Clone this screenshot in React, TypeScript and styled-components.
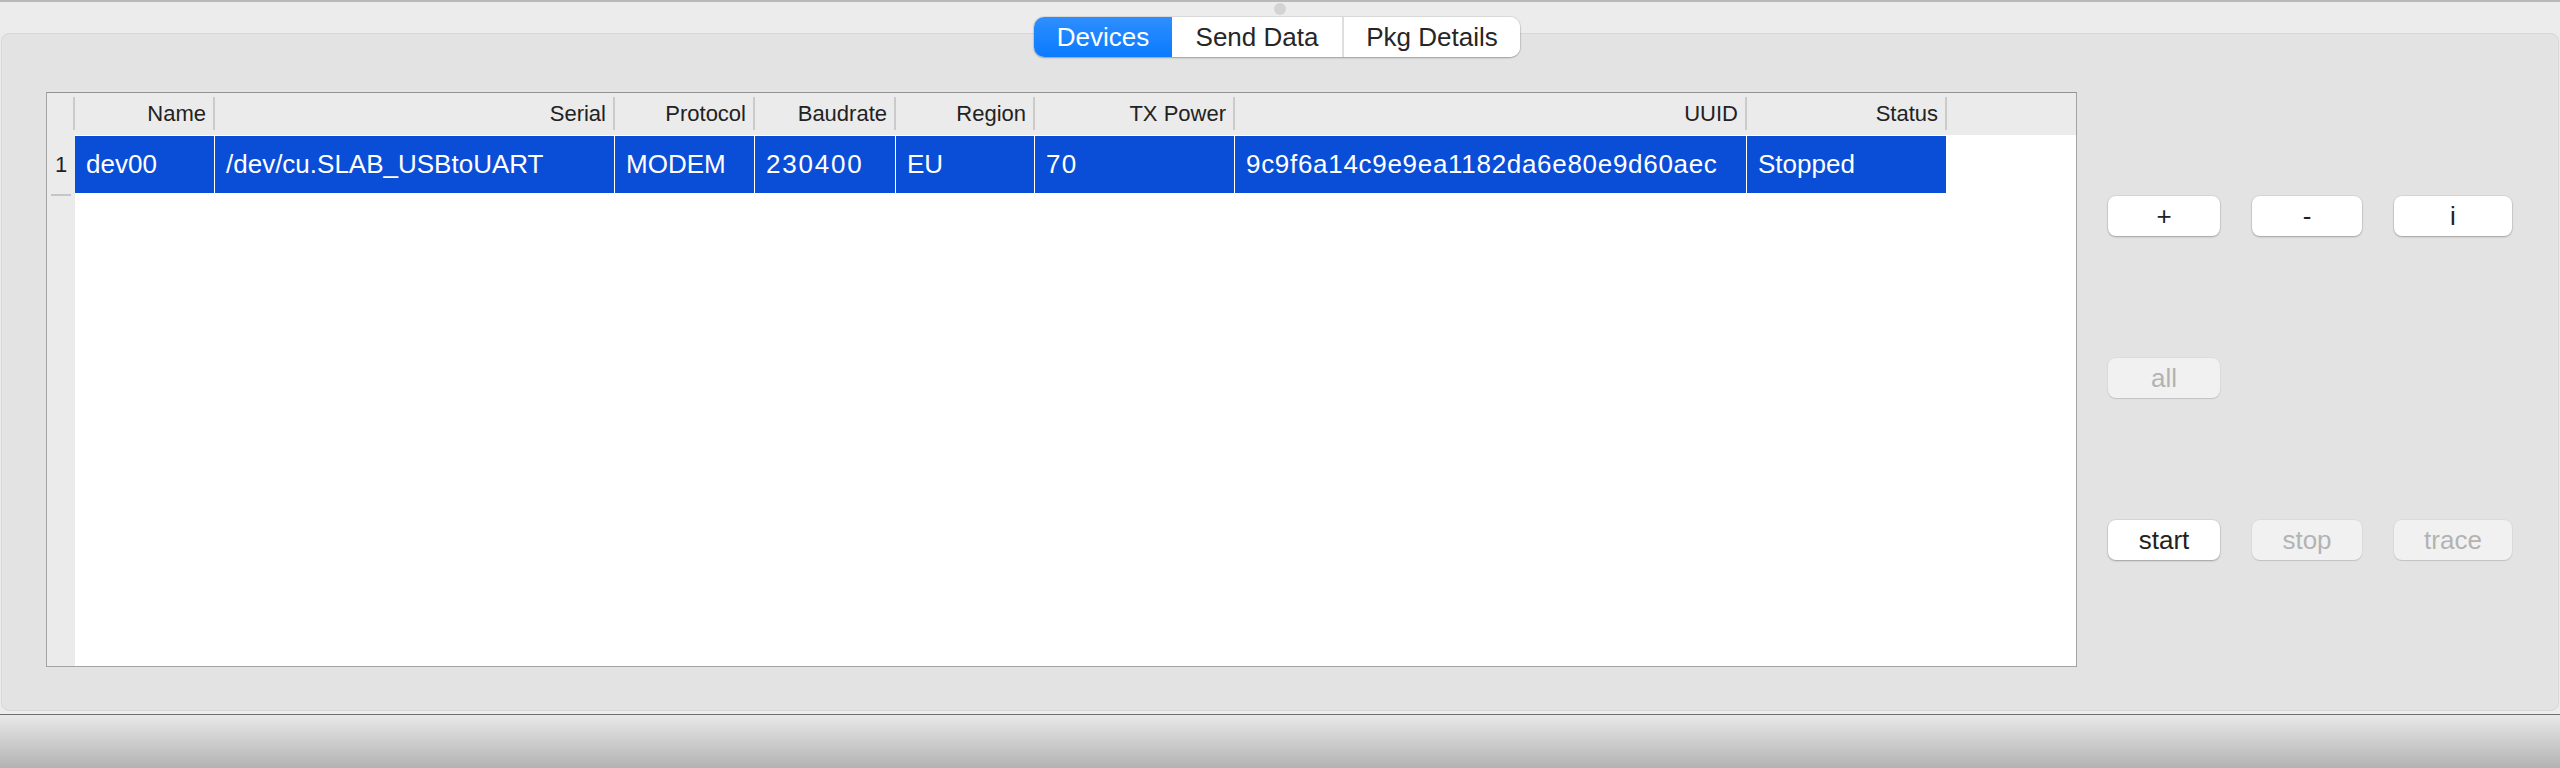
import React from "react";
import styled, { createGlobalStyle } from "styled-components";

const GlobalStyle = createGlobalStyle`
  html, body { margin: 0; padding: 0; }
  body {
    font-family: "Liberation Sans", Arial, Helvetica, sans-serif;
    background: #ececec;
    color: #222;
  }
  * { box-sizing: border-box; }
`;

const Window = styled.div`
  width: 2560px;
  height: 768px;
  display: flex;
  flex-direction: column;
  background: #ececec;
  overflow: hidden;
`;

const TopBar = styled.div`
  flex: none;
  height: 2px;
  background: #b9b9b9;
`;

const Content = styled.div`
  flex: 1;
  display: flex;
  flex-direction: column;
  padding: 0 1px;
`;

const Handle = styled.div`
  flex: none;
  width: 12px;
  height: 12px;
  border-radius: 50%;
  background: #d3d3d3;
  margin: 1px auto 0;
`;

const TabsRow = styled.div`
  display: flex;
  justify-content: center;
  margin-top: 2px;
  padding-right: 6px;
  position: relative;
  z-index: 1;
`;

const Segmented = styled.div`
  display: flex;
  height: 40px;
  border-radius: 10px;
  background: #ffffff;
  box-shadow: 0 0 0 1px rgba(0, 0, 0, 0.07), 0 1px 2px rgba(0, 0, 0, 0.25);
  overflow: hidden;
`;

const Segment = styled.div<{ $active?: boolean; $w: number; $divider?: boolean }>`
  width: ${(p) => p.$w}px;
  display: flex;
  align-items: center;
  justify-content: center;
  font-size: 26px;
  color: ${(p) => (p.$active ? "#ffffff" : "#262626")};
  background: ${(p) =>
    p.$active ? "linear-gradient(to bottom, #2e8efe, #0a7aff)" : "#ffffff"};
  border-left: ${(p) => (p.$divider ? "2px solid #dedede" : "none")};
`;

const Panel = styled.div`
  margin-top: -24px;
  height: 678px;
  border: 1px solid #d7d7d7;
  border-radius: 8px;
  background: #e3e3e3;
  display: flex;
  align-items: flex-start;
  padding: 58px 0 0 44px;
`;

const Table = styled.div`
  flex: none;
  width: 2031px;
  height: 575px;
  border: 1px solid #a3a3a3;
  border-top-color: #939393;
  display: flex;
  background: #ffffff;
`;

const RowHeaderColumn = styled.div`
  flex: none;
  width: 28px;
  background: #ebebeb;
  display: flex;
  flex-direction: column;
`;

const Corner = styled.div`
  height: 42px;
  position: relative;
  &::after {
    content: "";
    position: absolute;
    right: 0;
    top: 4px;
    bottom: 5px;
    width: 2px;
    background: #cacaca;
  }
`;

const RowNumber = styled.div`
  height: 57px;
  margin-top: 1px;
  display: flex;
  align-items: center;
  justify-content: center;
  font-size: 22px;
  color: #222;
`;

const RowTick = styled.div`
  height: 2px;
  margin: 1px 4px 0 4px;
  background: #c6c6c6;
`;

const MainArea = styled.div`
  flex: 1;
  display: flex;
  flex-direction: column;
`;

const columns = "140px 400px 140px 141px 139px 200px 512px 200px 1fr";

const HeaderRow = styled.div`
  height: 42px;
  display: grid;
  grid-template-columns: ${columns};
  background: #ebebeb;
`;

const HeaderCell = styled.div<{ $sep?: boolean }>`
  position: relative;
  display: flex;
  align-items: center;
  justify-content: flex-end;
  padding-right: 9px;
  font-size: 22px;
  color: #222;
  white-space: nowrap;
  &::after {
    content: "";
    display: ${(p) => (p.$sep === false ? "none" : "block")};
    position: absolute;
    right: 0;
    top: 4px;
    bottom: 5px;
    width: 2px;
    background: #cacaca;
  }
`;

const DataRow = styled.div`
  height: 57px;
  margin-top: 1px;
  display: grid;
  grid-template-columns: ${columns};
`;

const DataCell = styled.div<{ $empty?: boolean; $spacing?: number }>`
  display: flex;
  align-items: center;
  padding-left: 11px;
  font-size: 26px;
  letter-spacing: ${(p) => p.$spacing ?? 0}px;
  color: #ffffff;
  white-space: nowrap;
  background: ${(p) => (p.$empty ? "#ffffff" : "#0a4ed8")};
  border-right: ${(p) => (p.$empty ? "none" : "1px solid #ffffff")};
`;

const ButtonGrid = styled.div`
  margin-left: 31px;
  margin-top: 104px;
  display: grid;
  grid-template-columns: 112px 110px 118px;
  grid-template-rows: 40px 40px 40px;
  column-gap: 32px;
  row-gap: 122px;
`;

const Button = styled.div<{ $disabled?: boolean }>`
  display: flex;
  align-items: center;
  justify-content: center;
  border-radius: 8px;
  font-size: 26px;
  background: ${(p) => (p.$disabled ? "#f1f1f1" : "#ffffff")};
  color: ${(p) => (p.$disabled ? "#b3b3b3" : "#222222")};
  box-shadow: ${(p) =>
    p.$disabled
      ? "0 0 0 1px rgba(0,0,0,0.03), 0 1px 1px rgba(0,0,0,0.12)"
      : "0 0 0 1px rgba(0,0,0,0.05), 0 1px 2px rgba(0,0,0,0.25)"};
`;

const Footer = styled.div`
  flex: none;
  height: 54px;
  border-top: 1px solid #6e6e6e;
  background: linear-gradient(to bottom, #e8e8e8, #b3b3b3);
`;

const headers = ["Name", "Serial", "Protocol", "Baudrate", "Region", "TX Power", "UUID", "Status"];
const row: { v: string; s?: number }[] = [
  { v: "dev00" },
  { v: "/dev/cu.SLAB_USBtoUART" },
  { v: "MODEM" },
  { v: "230400", s: 1.8 },
  { v: "EU" },
  { v: "70", s: 1.2 },
  { v: "9c9f6a14c9e9ea1182da6e80e9d60aec", s: 0.7 },
  { v: "Stopped" },
];

export default function App() {
  return (
    <>
      <GlobalStyle />
      <Window>
        <TopBar />
        <Content>
          <Handle />
          <TabsRow>
            <Segmented>
              <Segment $active $w={138}>Devices</Segment>
              <Segment $w={170}>Send Data</Segment>
              <Segment $w={178} $divider>Pkg Details</Segment>
            </Segmented>
          </TabsRow>
          <Panel>
            <Table>
              <RowHeaderColumn>
                <Corner />
                <RowNumber>1</RowNumber>
                <RowTick />
              </RowHeaderColumn>
              <MainArea>
                <HeaderRow>
                  {headers.map((h) => (
                    <HeaderCell key={h}>{h}</HeaderCell>
                  ))}
                  <HeaderCell $sep={false} />
                </HeaderRow>
                <DataRow>
                  {row.map((c, i) => (
                    <DataCell key={i} $spacing={c.s}>
                      {c.v}
                    </DataCell>
                  ))}
                  <DataCell $empty />
                </DataRow>
              </MainArea>
            </Table>
            <ButtonGrid>
              <Button>+</Button>
              <Button>-</Button>
              <Button>i</Button>
              <Button $disabled>all</Button>
              <div />
              <div />
              <Button>start</Button>
              <Button $disabled>stop</Button>
              <Button $disabled>trace</Button>
            </ButtonGrid>
          </Panel>
        </Content>
        <Footer />
      </Window>
    </>
  );
}
